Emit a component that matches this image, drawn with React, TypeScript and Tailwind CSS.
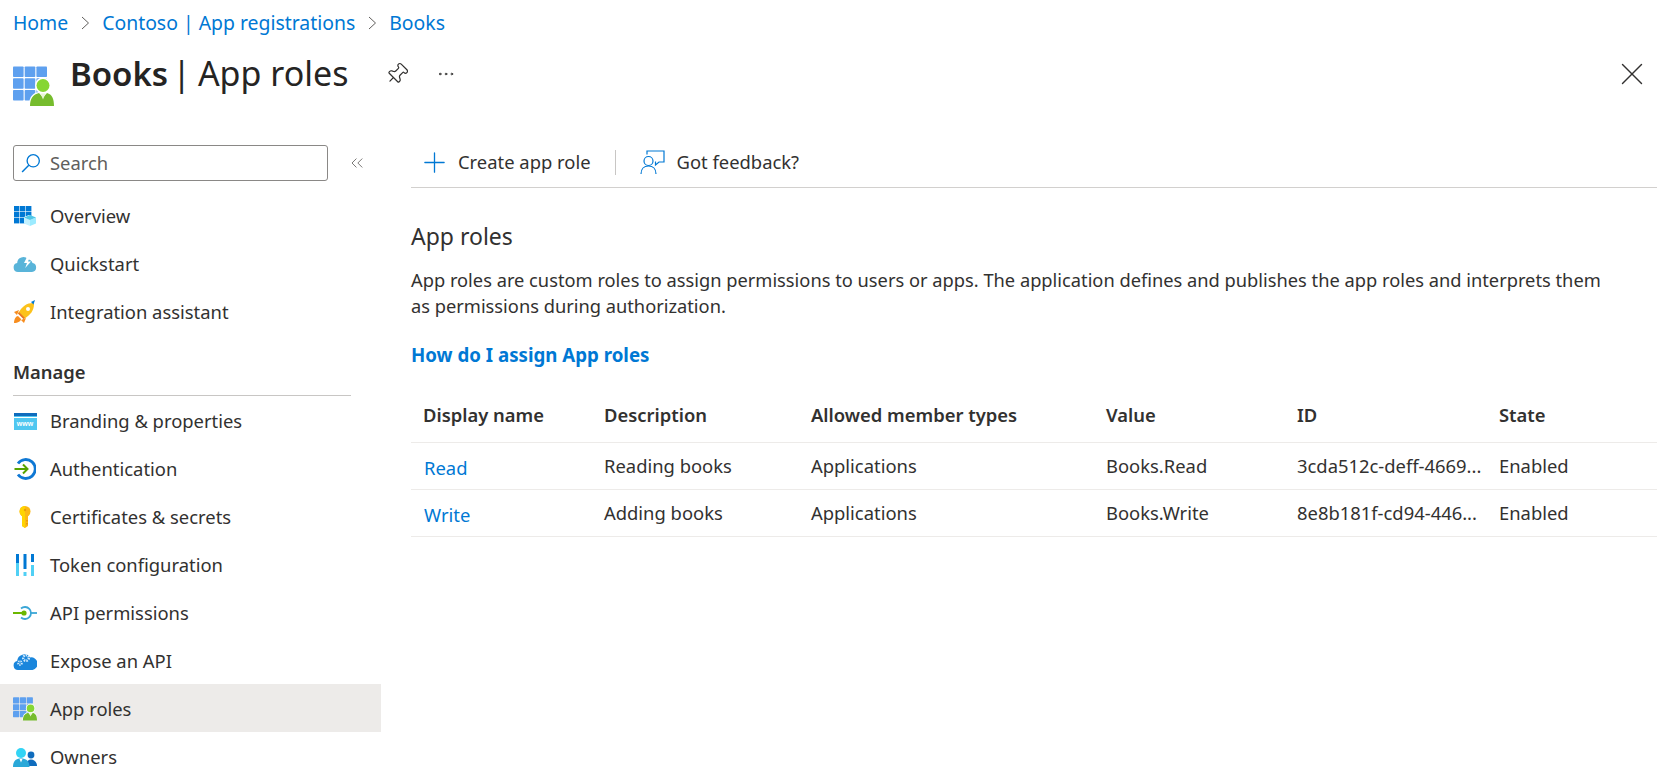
import type { ReactNode } from "react";
import { ChevronsLeft, Ellipsis, Pin, Plus, X } from "lucide-react";

function GridUser({ size = 41 }: { size?: number }) {
  return (
    <svg width={size} height={size} viewBox="0 0 41 40">
      {[0, 1, 2].map((r) =>
        [0, 1, 2].map((c) => (
          <rect key={`${r}${c}`} x={c * 11.7} y={r * 11.7} width="10.6" height="10.6" rx="0.8" fill="#5ea0ef" />
        ))
      )}
      <circle cx="30" cy="19" r="8" fill="#fff" />
      <path d="M16 39c0-9 4-14 14-14s11 5 11 14z" fill="#fff" />
      <circle cx="30" cy="19" r="6.5" fill="#86d633" />
      <path d="M17 39.500c0-7.500 3-11.500 9-13l4 4.500 4-4.500c5 1.500 7 5.500 7 13z" fill="#76bc2d" />
      <path d="M27.500 27h5l-2.500 6z" fill="#e8f6d4" />
    </svg>
  );
}

function OverviewIcon() {
  return (
    <svg width="23" height="20" viewBox="0 0 23 20">
      {[0, 1, 2].map((r) =>
        [0, 1, 2].map((c) => (
          <rect key={`${r}${c}`} x={c * 6} y={r * 6} width="5.400" height="5.400" fill="#0078d4" />
        ))
      )}
      <path d="M15 9l7 3v7l-6 1-6-3v-6z" fill="#fff" />
      <path d="M10 11.500l6 2.500v6l-6-2.500z" fill="#c3f1ff" />
      <path d="M16 14l6-2.500v6L16 20z" fill="#9cebff" />
      <path d="M10 11.500L16 9l6 2.500L16 14z" fill="#50c7e8" />
    </svg>
  );
}

function QuickstartIcon() {
  return (
    <svg width="24" height="16" viewBox="0 0 24 16">
      <path d="M5 16a4.500 4.500 0 0 1-.8-8.900A6 6 0 0 1 15 3.500a5 5 0 0 1 4.500 3.600A4.500 4.500 0 0 1 19 16z" fill="#59b4d9" />
      <path d="M14.500 0l-3.500 7h3l-1.800 5L18 5.500h-3l2-5.500z" fill="#fff" />
    </svg>
  );
}

function RocketIcon() {
  return (
    <svg width="24" height="24" viewBox="0 0 24 24">
      <path d="M6 10l-5 2 3 3zM13 18l-2 5-3-3z" fill="#f78d1e" />
      <path d="M1 23c0-4 2-7 4-7l3 3c0 2-3 4-7 4z" fill="#f78d1e" />
      <path d="M5 13.500C9 6 14 3 20 3l1 1c0 6-3 11-10.500 15z" fill="#fcc21b" />
      <path d="M5 13.500l5.500 5.500 1.500-1L6 12z" fill="#e8742a" />
      <path d="M18 2l4-2-1.500 4.500z" fill="#0078d4" />
      <circle cx="15" cy="9" r="2" fill="#fff" />
    </svg>
  );
}

function BrandingIcon() {
  return (
    <div className="flex h-[17px] w-[23px] flex-col border-t-[3px] border-[#0f6cbd] bg-[#50c7f0]">
      <div className="mt-px h-px bg-white" />
      <div className="flex-1 text-center font-['Liberation_Sans',sans-serif] text-[7px] font-bold leading-[11px] text-white">www</div>
    </div>
  );
}

function AuthIcon() {
  return (
    <svg width="22" height="22" viewBox="0 0 22 22">
      <path d="M4 5.500A9.500 9.500 0 1 1 4 16.500" fill="none" stroke="#0f78d4" strokeWidth="2.800" />
      <path d="M0.500 11h12.500M9 6.500l4.500 4.500L9 15.500" fill="none" stroke="#57a300" strokeWidth="2" />
    </svg>
  );
}

function KeyIcon() {
  return (
    <svg width="16" height="22" viewBox="0 0 16 22">
      <circle cx="8" cy="5.500" r="5.500" fill="#fcb814" />
      <path d="M5 8h6v12l-3 2-3-2z" fill="#fcb814" />
      <path d="M8 0a5.500 5.500 0 0 0-3 10v10l3 2z" fill="#ffd400" />
      <path d="M11 14h-2v1.500h2zM11 17h-2v1.500h2z" fill="#e89c0c" />
      <circle cx="8" cy="4" r="1.200" fill="#e89c0c" />
    </svg>
  );
}

function TokenIcon() {
  return (
    <svg width="18" height="22" viewBox="0 0 18 22">
      <rect x="0" y="0" width="3" height="9" fill="#0078d4" />
      <rect x="0" y="9" width="3" height="13" fill="#50d0f5" />
      <rect x="7.500" y="0" width="3" height="15" fill="#0078d4" />
      <rect x="7.500" y="18" width="3" height="4" fill="#50d0f5" />
      <rect x="15" y="0" width="3" height="8" fill="#0078d4" />
      <rect x="15" y="11" width="3" height="11" fill="#50d0f5" />
    </svg>
  );
}

function ApiIcon() {
  return (
    <svg width="24" height="14" viewBox="0 0 24 14">
      <path d="M8 2.500a6 6 0 1 1 0 9" fill="none" stroke="#3ba6d6" strokeWidth="1.800" />
      <path d="M18 7h6" stroke="#3ba6d6" strokeWidth="1.800" />
      <path d="M0 7h10" stroke="#6bb700" strokeWidth="2" />
      <circle cx="11" cy="7" r="2.600" fill="#6bb700" />
    </svg>
  );
}

function ExposeIcon() {
  return (
    <svg width="24" height="18" viewBox="0 0 24 18">
      <path d="M5 18a4.500 4.500 0 0 1-.8-8.900A7 7 0 0 1 17 5.500a5.500 5.500 0 0 1 2.500 12.500z" fill="#1a86dc" />
      <circle cx="13" cy="6" r="2.800" fill="none" stroke="#d5ebfb" strokeWidth="2.400" strokeDasharray="1.500 1" />
      <circle cx="7" cy="11" r="1.800" fill="none" stroke="#d5ebfb" strokeWidth="2" strokeDasharray="1.200 0.800" />
    </svg>
  );
}

function OwnersIcon() {
  return (
    <svg width="24" height="19" viewBox="0 0 24 19">
      <circle cx="18" cy="7" r="3.400" fill="#0f6cbd" />
      <path d="M13 18c0-4 2-6.500 5-6.500s6 2.500 6 6.500z" fill="#0f6cbd" />
      <circle cx="8" cy="5" r="5" fill="#32d4f5" />
      <path d="M0 19c0-6 3-8.500 8-8.500s8.500 2.500 8.500 8.500z" fill="#2aa8d8" />
      <path d="M6.500 11h3l-1.500 3.500z" fill="#fff" />
    </svg>
  );
}

function SearchIcon() {
  return (
    <svg width="20" height="20" viewBox="0 0 18 18" fill="none">
      <circle cx="11" cy="7" r="5.500" stroke="#0078d4" strokeWidth="1.200" />
      <path d="M7 11l-6 6" stroke="#0078d4" strokeWidth="1.300" />
    </svg>
  );
}

function FeedbackIcon() {
  return (
    <svg width="25" height="24" viewBox="0 0 25 24" fill="none" stroke="#0078d4" strokeWidth="1.200">
      <circle cx="8.500" cy="11" r="4.500" />
      <path d="M1 24c0-5 3-8 7.500-8s7.500 3 7.500 8" />
      <path d="M7 4.500V1h17v11h-5l-3.500 3v-3H15" />
    </svg>
  );
}

function Crumb() {
  return (
    <svg width="9" height="14" viewBox="0 0 9 14" fill="none" className="mx-[12.500px]">
      <path d="M1 1l6.500 6L1 13" stroke="#605e5c" strokeWidth="1" />
    </svg>
  );
}

const topItems: { label: string; icon: ReactNode }[] = [
  { label: "Overview", icon: <OverviewIcon /> },
  { label: "Quickstart", icon: <QuickstartIcon /> },
  { label: "Integration assistant", icon: <RocketIcon /> },
];

const manageItems: { label: string; icon: ReactNode; active?: boolean }[] = [
  { label: "Branding & properties", icon: <BrandingIcon /> },
  { label: "Authentication", icon: <AuthIcon /> },
  { label: "Certificates & secrets", icon: <KeyIcon /> },
  { label: "Token configuration", icon: <TokenIcon /> },
  { label: "API permissions", icon: <ApiIcon /> },
  { label: "Expose an API", icon: <ExposeIcon /> },
  { label: "App roles", icon: <GridUser size={24} />, active: true },
  { label: "Owners", icon: <OwnersIcon /> },
];

const roles = [
  { name: "Read", description: "Reading books", types: "Applications", value: "Books.Read", id: "3cda512c-deff-4669...", state: "Enabled" },
  { name: "Write", description: "Adding books", types: "Applications", value: "Books.Write", id: "8e8b181f-cd94-446...", state: "Enabled" },
];

function NavItem({ label, icon, active }: { label: string; icon: ReactNode; active?: boolean }) {
  return (
    <div className={`flex h-[48px] items-center pl-[13px] ${active ? "-mt-px mb-px bg-[#edebe9] pt-[2px]" : ""}`}>
      <span className="flex w-[24px] justify-center">{icon}</span>
      <span className="ml-[13px]">{label}</span>
    </div>
  );
}

export default function App() {
  return (
    <div className="h-[777px] overflow-hidden bg-white font-['Noto_Sans',sans-serif] text-[18.4px] text-[#323130]">
      <div className="flex h-[46px] items-center pl-[13px] text-[19.4px] text-[#0078d4]">
        <span>Home</span>
        <Crumb />
        <span>Contoso | App registrations</span>
        <Crumb />
        <span>Books</span>
      </div>

      <div className="flex h-[62px] items-start pl-[13px]">
        <div className="mt-[20px]"><GridUser /></div>
        <h1 className="ml-[16px] flex items-baseline text-[33px] leading-[54px] text-[#252423]">
          <span className="font-semibold">Books</span>
          <span className="ml-[4px] text-[34px]">|</span>
          <span className="ml-[7px] text-[34px]">App roles</span>
        </h1>
        <Pin className="ml-[37px] mt-[16px] h-[24px] w-[24px] rotate-45 text-[#323130]" strokeWidth={1.2} />
        <Ellipsis className="ml-[27px] mt-[18px] h-[20px] w-[20px] text-[#323130]" strokeWidth={1.2} />
        <X className="ml-auto mr-[22px] mt-[9px] h-[38px] w-[38px] text-[#323130]" strokeWidth={0.9} />
      </div>

      <div className="flex">
        <aside className="w-[381px] shrink-0">
          <div className="mt-[37px] flex items-center pb-[11px] pl-[13px]">
            <div className="flex h-[36px] w-[315px] items-center rounded-[3px] border border-[#8a8886] pl-[7px] text-[#605e5c]">
              <SearchIcon />
              <span className="mb-px ml-[9px]">Search</span>
            </div>
            <ChevronsLeft className="ml-[19px] h-[20px] w-[20px] text-[#605e5c]" strokeWidth={1} />
          </div>
          {topItems.map((item) => (
            <NavItem key={item.label} {...item} />
          ))}
          <div className="ml-[13px] mr-[30px] mt-[13px] h-[47px] border-b border-[#c8c6c4] pt-[10px] font-semibold leading-[26px]">Manage</div>
          <div className="pt-px">
            {manageItems.map((item) => (
              <NavItem key={item.label} {...item} />
            ))}
          </div>
        </aside>

        <main className="mr-[16px] mt-[37px] flex-1 pl-[30px]">
          <div className="flex h-[43px] items-center border-b border-[#d2d0ce] pb-[8px] pl-[7px]">
            <Plus className="h-[33px] w-[33px] text-[#0078d4]" strokeWidth={0.95} />
            <span className="ml-[7px]">Create app role</span>
            <div className="ml-[24px] h-[25px] w-px bg-[#c8c6c4]" />
            <span className="ml-[24px]"><FeedbackIcon /></span>
            <span className="ml-[12px]">Got feedback?</span>
          </div>

          <h2 className="mt-[32px] text-[23px] leading-[32px]">App roles</h2>
          <p className="mt-[15px] max-w-[1198px] text-[18.27px] leading-[26px]">
            App roles are custom roles to assign permissions to users or apps. The application defines and publishes the app roles and interprets them as permissions during authorization.
          </p>
          <a className="mt-[23px] block text-[18.7px] font-bold leading-[26px] text-[#0078d4]">How do I assign App roles</a>

          <div className="mt-[27px] grid h-[48px] grid-cols-[181px_207px_295px_191px_202px_1fr] items-center border-b border-[#edebe9] pb-[7px] pl-[12px] font-semibold">
            <span>Display name</span>
            <span>Description</span>
            <span>Allowed member types</span>
            <span>Value</span>
            <span>ID</span>
            <span>State</span>
          </div>
          {roles.map((role) => (
            <div key={role.name} className="grid h-[47px] grid-cols-[181px_207px_295px_191px_202px_1fr] items-center border-b border-[#edebe9] pl-[12px]">
              <span className="pl-px pt-[3px] text-[#0078d4]">{role.name}</span>
              <span>{role.description}</span>
              <span>{role.types}</span>
              <span>{role.value}</span>
              <span>{role.id}</span>
              <span>{role.state}</span>
            </div>
          ))}
        </main>
      </div>
    </div>
  );
}
